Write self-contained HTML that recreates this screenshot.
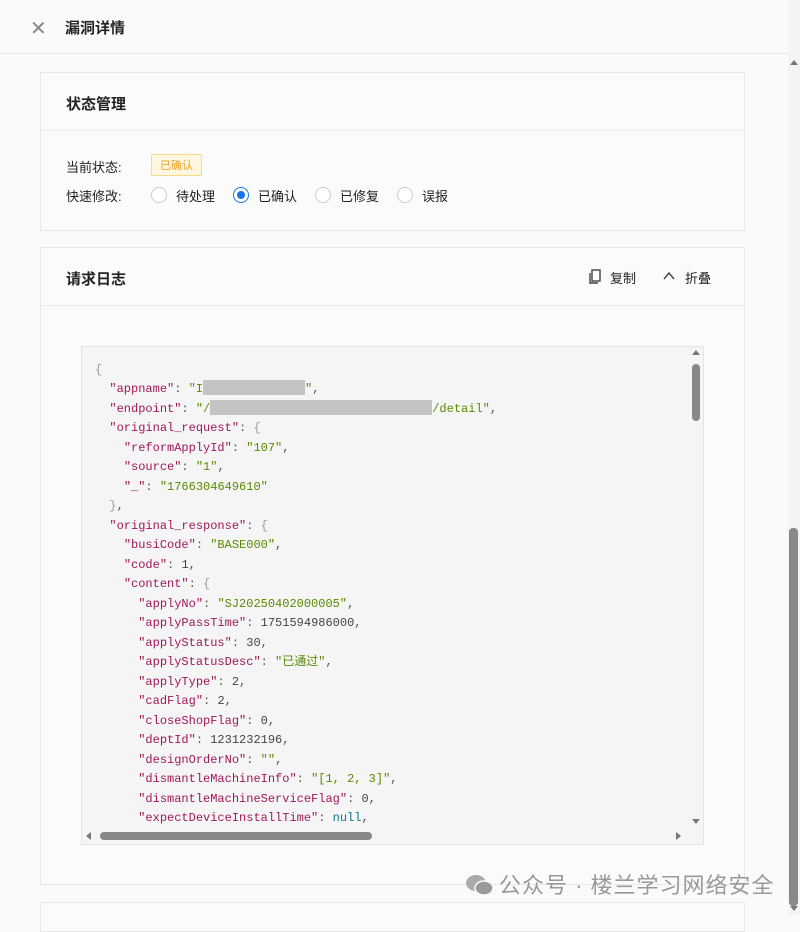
<!DOCTYPE html>
<html><head><meta charset="utf-8"><style>
*{box-sizing:border-box;margin:0;padding:0}
body{width:800px;height:915px;overflow:hidden;background:#fafafa;font-family:"Liberation Sans","Noto Sans CJK SC",sans-serif;color:#222;position:relative;font-size:13px}
.top{position:absolute;left:0;top:0;width:800px;height:54px;background:#fafafa;border-bottom:1px solid #e6e6e6}
.top .x{position:absolute;left:30px;top:16px;font-size:20px;color:#888}
.top .t{position:absolute;left:65px;top:17px;font-size:15px;font-weight:bold;color:#222}
.card{position:absolute;left:40px;width:705px;background:#fbfbfb;border:1px solid #e8e8e8}
.hd{height:58px;border-bottom:1px solid #ececec;position:relative}
.hd .h{position:absolute;left:25px;top:20px;font-size:15px;font-weight:bold}
.lbl{position:absolute;left:25px;font-size:13px}
.tag{position:absolute;left:110px;top:81px;border:1px solid #f7d98a;background:#fff7e0;color:#f0a020;font-size:11px;padding:2px 8px;border-radius:2px}
.r{position:absolute;top:114px;width:16px;height:16px;border:1px solid #ccc;border-radius:50%;background:#fff}
.r.on{border-color:#1a73e8}.r.on:after{content:"";position:absolute;left:3px;top:3px;width:8px;height:8px;border-radius:50%;background:#1a73e8}
.rl{position:absolute;top:113px;font-size:13px}
.code{position:absolute;left:81px;top:346px;width:623px;height:499px;background:#f5f5f5;border:1px solid #e3e3e3;overflow:hidden}
pre{position:absolute;left:13px;top:14px;font-family:"Liberation Mono","Noto Sans CJK SC",monospace;font-size:12px;line-height:19.48px;color:#555}
.k{color:#a0185a}.s{color:#5a8a00}.n{color:#444}.b{color:#999}.nl{color:#0a7a8a}
.red{display:inline-block;background:#c4c4c4;height:15px;vertical-align:-3px}
</style></head><body>
<div class="top"><span class="x">✕</span><span class="t">漏洞详情</span></div>

<div class="card" style="top:72px;height:159px">
 <div class="hd"><span class="h">状态管理</span></div>
 <span class="lbl" style="top:84px">当前状态:</span>
 <span class="tag">已确认</span>
 <span class="lbl" style="top:113px">快速修改:</span>
 <span class="r" style="left:110px"></span><span class="rl" style="left:135px">待处理</span>
 <span class="r on" style="left:192px"></span><span class="rl" style="left:217px">已确认</span>
 <span class="r" style="left:274px"></span><span class="rl" style="left:299px">已修复</span>
 <span class="r" style="left:356px"></span><span class="rl" style="left:381px">误报</span>
</div>

<div class="card" style="top:247px;height:638px">
 <div class="hd"><span class="h">请求日志</span>
  <svg style="position:absolute;left:548px;top:21px" width="12" height="15" viewBox="0 0 12 15"><rect x="3" y="1" width="8" height="11" fill="none" stroke="#444" stroke-width="1.4"/><path d="M1 4v10h8" fill="none" stroke="#444" stroke-width="1.4"/></svg>
  <span style="position:absolute;left:569px;top:20px;font-size:13px">复制</span>
  <svg style="position:absolute;left:622px;top:23px" width="12" height="9" viewBox="0 0 12 9"><path d="M1 8l5-6 5 6" fill="none" stroke="#444" stroke-width="1.4"/></svg>
  <span style="position:absolute;left:644px;top:20px;font-size:13px">折叠</span>
 </div>
</div>
<div class="card" style="top:902px;height:30px"></div>

<div class="code">
<pre><span class="b">{</span>
  <span class="k">"appname"</span>: <span class="s">"I<span class="red" style="width:102px"></span>"</span>,
  <span class="k">"endpoint"</span>: <span class="s">"/<span class="red" style="width:222px"></span>/detail"</span>,
  <span class="k">"original_request"</span>: <span class="b">{</span>
    <span class="k">"reformApplyId"</span>: <span class="s">"107"</span>,
    <span class="k">"source"</span>: <span class="s">"1"</span>,
    <span class="k">"_"</span>: <span class="s">"1766304649610"</span>
  <span class="b">}</span>,
  <span class="k">"original_response"</span>: <span class="b">{</span>
    <span class="k">"busiCode"</span>: <span class="s">"BASE000"</span>,
    <span class="k">"code"</span>: <span class="n">1</span>,
    <span class="k">"content"</span>: <span class="b">{</span>
      <span class="k">"applyNo"</span>: <span class="s">"SJ20250402000005"</span>,
      <span class="k">"applyPassTime"</span>: <span class="n">1751594986000</span>,
      <span class="k">"applyStatus"</span>: <span class="n">30</span>,
      <span class="k">"applyStatusDesc"</span>: <span class="s">"已通过"</span>,
      <span class="k">"applyType"</span>: <span class="n">2</span>,
      <span class="k">"cadFlag"</span>: <span class="n">2</span>,
      <span class="k">"closeShopFlag"</span>: <span class="n">0</span>,
      <span class="k">"deptId"</span>: <span class="n">1231232196</span>,
      <span class="k">"designOrderNo"</span>: <span class="s">""</span>,
      <span class="k">"dismantleMachineInfo"</span>: <span class="s">"[1, 2, 3]"</span>,
      <span class="k">"dismantleMachineServiceFlag"</span>: <span class="n">0</span>,
      <span class="k">"expectDeviceInstallTime"</span>: <span class="nl">null</span>,</pre>
 <div style="position:absolute;right:3px;top:17px;width:8px;height:57px;background:#888;border-radius:4px"></div>
 <div style="position:absolute;right:3px;top:3px;width:0;height:0;border:4px solid transparent;border-bottom:5px solid #777;border-top:0"></div>
 <div style="position:absolute;right:3px;bottom:20px;width:0;height:0;border:4px solid transparent;border-top:5px solid #777;border-bottom:0"></div>
 <div style="position:absolute;left:18px;bottom:4px;width:272px;height:8px;background:#888;border-radius:4px"></div>
 <div style="position:absolute;left:4px;bottom:4px;width:0;height:0;border:4px solid transparent;border-right:5px solid #777;border-left:0"></div>
 <div style="position:absolute;left:594px;bottom:4px;width:0;height:0;border:4px solid transparent;border-left:5px solid #777;border-right:0"></div>
</div>

<div style="position:absolute;left:788px;top:0;width:12px;height:915px;background:#f4f4f4"></div>
<div style="position:absolute;left:790px;top:60px;width:0;height:0;border:4px solid transparent;border-bottom:5px solid #777;border-top:0"></div>
<div style="position:absolute;left:789px;top:528px;width:9px;height:378px;background:#888;border-radius:4px"></div>
<div style="position:absolute;left:790px;top:906px;width:0;height:0;border:4px solid transparent;border-top:5px solid #777;border-bottom:0"></div>

<div style="position:absolute;left:465px;top:868px;font-size:22px;color:#999;letter-spacing:1px;white-space:nowrap"><svg width="30" height="24" viewBox="0 0 30 24" style="vertical-align:-4px;margin-right:4px"><ellipse cx="11" cy="10" rx="10" ry="8" fill="#aaa"/><ellipse cx="19" cy="15" rx="9" ry="7" fill="#999" stroke="#fafafa" stroke-width="1.5"/></svg>公众号 · 楼兰学习网络安全</div>
</body></html>
